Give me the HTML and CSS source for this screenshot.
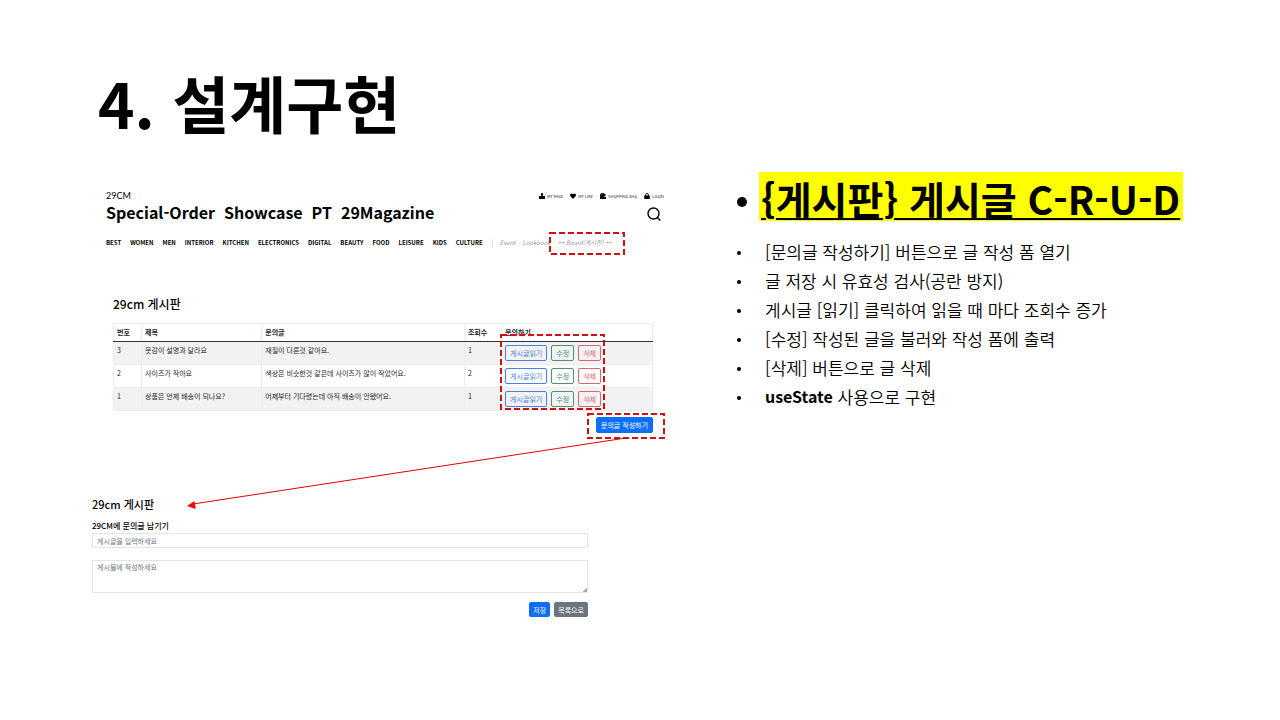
FILE: index.html
```html
<!DOCTYPE html>
<html lang="ko">
<head>
<meta charset="utf-8">
<meta name="viewport" content="width=device-width, initial-scale=1">
<title>4. 설계구현</title>
<link rel="stylesheet" href="styles.css">
</head>
<body>
<main class="slide">
  <h1 class="slide-title">4. 설계구현</h1>
  <div class="columns">
    <div class="demo">
      <header class="shop">
        <div class="shop-top">
          <div class="brand">
            <p class="logo">29CM</p>
            <h2 class="shop-title">Special-Order  Showcase  PT  29Magazine</h2>
          </div>
          <div class="tools">
            <ul class="utility">
              <li><a href="#"><svg class="mini" viewBox="0 0 12 12"><path d="M6 0a2.500 2.500 0 0 1 1.500 4.500V6H12v6H0V6h4.500V4.500A2.500 2.500 0 0 1 6 0z"/></svg>MY PAGE</a></li>
              <li><a href="#"><svg class="mini" viewBox="0 0 12 12"><path d="M6 12 .8 6.500C-1.200 3.500 1 .5 3.500.8 5 1 6 2.500 6 2.500S7 1 8.500.8C11 .5 13.200 3.500 11.200 6.500z"/></svg>MY LIKE</a></li>
              <li><a href="#"><svg class="mini" viewBox="0 0 12 12"><path d="M0 2h2.500V0h6v2H11v4H9v2h3v4H0z"/><path d="M4.500 1.500h2v1h-2z" fill="#fff"/></svg>SHOPPING BAG</a></li>
              <li><a href="#"><svg class="mini" viewBox="0 0 12 12"><path d="M.5 5h11v7H.5z"/><path d="M3.200 6V3.500a2.800 2.600 0 0 1 5.600 0V6" fill="none" stroke="#000" stroke-width="1.800"/></svg>LOGIN</a></li>
            </ul>
            <button class="search" type="button" aria-label="Search"><svg viewBox="0 0 14 14"><circle cx="6.500" cy="6.500" r="5.500"/><path d="m10.400 10.400 3 3"/></svg></button>
          </div>
        </div>
        <nav class="menu">
          <a href="#">BEST</a><a href="#">WOMEN</a><a href="#">MEN</a><a href="#">INTERIOR</a><a href="#">KITCHEN</a><a href="#">ELECTRONICS</a><a href="#">DIGITAL</a><a href="#">BEAUTY</a><a href="#">FOOD</a><a href="#">LEISURE</a><a href="#">KIDS</a><a href="#">CULTURE</a>
          <span class="extra"><a href="#">Event</a><a href="#">Lookbook</a><a class="marked" href="#">++ Board(게시판) ++<svg class="mark mark-board"><rect class="dash" x="1" y="1"/></svg></a></span>
        </nav>
      </header>

      <section class="board">
        <h3 class="board-title">29cm 게시판</h3>
        <div class="table-wrap">
          <table class="posts">
            <colgroup><col class="c-no"><col class="c-title"><col class="c-text"><col class="c-views"><col class="c-act"></colgroup>
            <thead><tr><th>번호</th><th>제목</th><th>문의글</th><th>조회수</th><th>문의하기</th></tr></thead>
            <tbody>
              <tr><td>3</td><td>옷감이 설명과 달라요</td><td>재질이 다른것 같아요.</td><td>1</td><td><div class="acts"><button class="btn read" type="button">게시글읽기</button><button class="btn edit" type="button">수정</button><button class="btn del" type="button">삭제</button></div></td></tr>
              <tr><td>2</td><td>사이즈가 작아요</td><td>색상은 비슷한것 같은데 사이즈가 많이 작았어요.</td><td>2</td><td><div class="acts"><button class="btn read" type="button">게시글읽기</button><button class="btn edit" type="button">수정</button><button class="btn del" type="button">삭제</button></div></td></tr>
              <tr><td>1</td><td>상품은 언제 배송이 되나요?</td><td>어제부터 기다렸는데 아직 배송이 안됐어요.</td><td>1</td><td><div class="acts"><button class="btn read" type="button">게시글읽기</button><button class="btn edit" type="button">수정</button><button class="btn del" type="button">삭제</button></div></td></tr>
            </tbody>
          </table>
          <svg class="mark mark-acts"><rect class="dash" x="1" y="1"/></svg>
        </div>
        <div class="write-row">
          <div class="write-wrap">
            <button class="btn primary" type="button">문의글 작성하기</button>
            <svg class="mark mark-write"><rect class="dash" x="1" y="1"/></svg>
          </div>
        </div>
      </section>

      <svg class="arrow" viewBox="0 0 440 72" preserveAspectRatio="none"><path d="M439 1 6 67" fill="none" stroke="#e00000" stroke-width="1"/><path d="m0 69 7.500-5 1.200 8z" fill="#f00"/></svg>

      <form class="form">
        <h3 class="form-title">29cm 게시판</h3>
        <label class="form-label" for="subject">29CM에 문의글 남기기</label>
        <input class="field" id="subject" type="text" placeholder="게시글을 입력하세요">
        <textarea class="field area" aria-label="내용" placeholder="게시물에 작성하세요"></textarea>
        <div class="form-actions">
          <button class="btn primary" type="button">저장</button>
          <button class="btn secondary" type="button">목록으로</button>
        </div>
      </form>
    </div>

    <section class="notes">
      <h2 class="notes-title"><span class="hl">{게시판} 게시글 C-R-U-D</span></h2>
      <ul class="points">
        <li>[문의글 작성하기] 버튼으로 글 작성 폼 열기</li>
        <li>글 저장 시 유효성 검사(공란 방지)</li>
        <li>게시글 [읽기] 클릭하여 읽을 때 마다 조회수 증가</li>
        <li>[수정] 작성된 글을 불러와 작성 폼에 출력</li>
        <li>[삭제] 버튼으로 글 삭제</li>
        <li><b>useState</b> 사용으로 구현</li>
      </ul>
    </section>
  </div>
</main>
</body>
</html>
```
FILE: styles.css
```css
* { box-sizing: border-box; }
body { margin: 0; background: #fff; color: #000; font-family: "Noto Sans CJK KR", "Noto Sans", sans-serif; }
h1, h2, h3, p, ul { margin: 0; padding: 0; }
ul { list-style: none; }
a { color: inherit; text-decoration: none; }
button, input, textarea { font: inherit; margin: 0; }

.slide { padding: 62px 95px 62px 92px; }
.slide-title { padding-left: 6px; font-size: 62px; line-height: 80px; font-weight: 700; }
.columns { display: grid; grid-template-columns: minmax(0, 572fr) minmax(0, 450fr); column-gap: 71px; padding-top: 30px; }
.demo { position: relative; padding-top: 20px; }

.shop { padding-left: 14px; }
.shop-top { display: flex; justify-content: space-between; }
.logo { font: 9px/8px Lato, sans-serif; }
.shop-title { font-size: 16px; line-height: 24px; font-weight: 700; white-space: pre; }
.tools { display: flex; flex-direction: column; align-items: flex-end; gap: 7px; }
.utility { display: flex; gap: 7px; font-size: 4px; line-height: 8px; color: #222; }
.utility a { display: flex; align-items: center; gap: 2px; white-space: nowrap; }
.mini { width: 6px; height: 6px; fill: #000; }
.search { display: block; width: 14px; height: 14px; margin-right: 3px; padding: 0; border: 0; background: none; }
.search svg { display: block; width: 14px; height: 14px; fill: none; stroke: #000; stroke-width: 1.4; }
.menu { display: flex; align-items: center; gap: 9px; margin-top: 14px; font-size: 6px; line-height: 10px; font-weight: 700; white-space: nowrap; }
.extra { display: flex; gap: 7px; padding-left: 7px; border-left: 1px solid #ddd; font-weight: 400; font-style: italic; color: #999; line-height: 8px; }
.marked { position: relative; }

.board { padding: 47px 11px 0 21px; }
.board-title { font-size: 12px; line-height: 18px; font-weight: 500; }
.table-wrap { position: relative; margin-top: 10px; }
.posts { width: 100%; table-layout: fixed; border-collapse: collapse; font-size: 7px; line-height: 10px; color: #212529; }
.c-no { width: 5.2%; }
.c-title { width: 22.3%; }
.c-text { width: 37.6%; }
.c-views { width: 6.9%; }
.c-act { width: 28%; }
.posts th, .posts td { padding: 3px; border: 1px solid #ebedef; text-align: left; vertical-align: top; white-space: nowrap; }
.posts th { height: 18px; font-weight: 700; border-bottom: 1px solid #333; }
.posts td { height: 23px; }
.posts tbody tr:nth-child(odd) { background: #f2f2f2; }
.acts { display: flex; gap: 4px; }
.btn { height: 16px; padding: 0 4px; border: 1px solid; border-radius: 2px; background: none; font-size: 7px; line-height: 12px; white-space: nowrap; }
.read { color: #4a80e8; }
.edit { color: #4c9470; }
.del { color: #dc6670; }
.primary { background: #0d6efd; border-color: #0d6efd; color: #fff; }
.secondary { background: #6c757d; border-color: #6c757d; color: #fff; }
.mark { position: absolute; overflow: visible; pointer-events: none; }
.dash { width: 100%; height: 100%; fill: none; stroke: #d01010; stroke-width: 2; stroke-dasharray: 6 3; }
.mark-board { left: -9px; top: -7px; width: 74px; height: 21px; }
.mark-acts { left: 387px; top: 11px; width: 103px; height: 74px; }
.write-row { display: flex; justify-content: flex-end; margin-top: 6px; }
.write-wrap { position: relative; display: flex; }
.mark-write { left: -9px; top: -4px; width: 76px; height: 24px; }
.arrow { position: absolute; left: 95px; top: 265px; width: 440px; height: 72px; }

.form { display: flex; flex-direction: column; margin: 62px 76px 0 0; }
.form-title { font-size: 11px; line-height: 18px; font-weight: 500; }
.form-label { margin-top: 7px; font-size: 8px; line-height: 12px; font-weight: 500; }
.field { width: 100%; height: 15px; margin-top: 1px; padding: 0 4px; border: 1px solid #e2e5e8; border-radius: 1px; outline: 0; font-size: 7px; line-height: 12px; color: #212529; }
.field::placeholder { color: #6c757d; opacity: 1; }
.area { height: 33px; margin-top: 12px; resize: vertical; }
.area::-webkit-resizer { background: linear-gradient(135deg, transparent 84%, #aaa 84%); }
.form-actions { display: flex; justify-content: flex-end; gap: 4px; margin-top: 9px; }
.form-actions .btn { height: 15px; padding: 0 3px; }

.notes-title { display: flex; align-items: center; font-size: 39px; line-height: 46px; font-weight: 700; white-space: nowrap; }
.notes-title::before { content: ""; width: 10px; height: 10px; margin: 10px 12px 0 2px; border-radius: 50%; background: #000; }
.hl { padding: 3px 3px 0 2px; background: #ff0; text-decoration: underline; text-decoration-thickness: 2px; text-underline-offset: 3px; }
.points { margin-top: 16px; font-size: 17px; line-height: 29px; font-weight: 350; }
.points li { display: flex; align-items: center; white-space: pre; }
.points li::before { content: ""; width: 4px; height: 4px; margin: 2px 24px 0 2px; border-radius: 50%; background: #000; }
.points b { font-size: 16px; font-weight: 700; }
```
